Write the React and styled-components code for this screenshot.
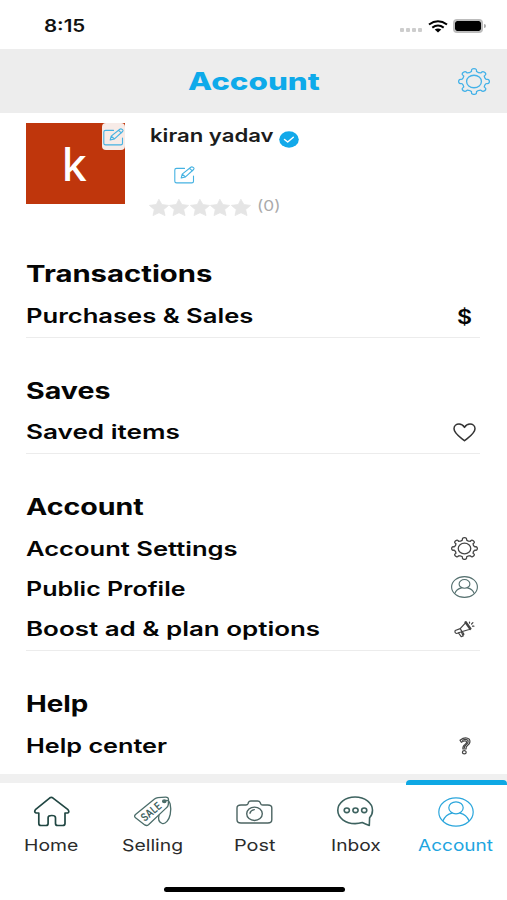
import React, { useLayoutEffect, useRef, useState } from 'react';
import styled, { createGlobalStyle } from 'styled-components';

// Text that is widened to a given width, the letters are drawn extended
const FitText = ({ children, width, ...rest }) => {
  const ref = useRef(null);
  const [scale, setScale] = useState(1);

  useLayoutEffect(() => {
    setScale(width / ref.current.offsetWidth);
  }, [width, children]);

  return (
    <TextBox $width={width} {...rest}>
      <TextInner ref={ref} style={{ transform: `scaleX(${scale})` }}>
        {children}
      </TextInner>
    </TextBox>
  );
};

const gearPath = (cx, cy, rx, ry) => {
  const tooth = [
    [-22.5, 0.76],
    [-16, 0.8],
    [-11, 0.8],
    [-10.5, 0.98],
    [0, 1.04],
    [10.5, 0.98],
    [11, 0.8],
    [16, 0.8],
  ];
  const pts = [];
  for (let i = 0; i < 8; i++) {
    tooth.forEach(([a, r]) => {
      const t = ((i * 45 + a - 90) * Math.PI) / 180;
      pts.push([cx + Math.cos(t) * r * rx, cy + Math.sin(t) * r * ry]);
    });
  }
  const mid = (a, b) => `${((a[0] + b[0]) / 2).toFixed(2)} ${((a[1] + b[1]) / 2).toFixed(2)}`;
  let d = `M${mid(pts[pts.length - 1], pts[0])}`;
  pts.forEach((p, i) => {
    d += `Q${p[0].toFixed(2)} ${p[1].toFixed(2)} ${mid(p, pts[(i + 1) % pts.length])}`;
  });
  return d + 'Z';
};

const GearIcon = ({ w, h, ...rest }) => (
  <Icon width={w} height={h} viewBox={`0 0 ${w} ${h}`} {...rest}>
    <path d={gearPath(w / 2, h / 2, w / 2 - 0.9, h / 2 - 0.9)} />
    <ellipse cx={w / 2} cy={h / 2} rx={w * 0.232} ry={h * 0.232} />
  </Icon>
);

const EditIcon = () => (
  <Icon width="21" height="18" viewBox="0 0 21 18" $color="#45b2e2" $stroke={1.1}>
    <path d="M10.5 2.4H2.6Q.8 2.4.8 4v11.2q0 1.7 1.8 1.7h15.2q1.7 0 1.7-1.7V10" />
    <path d="M7.2 12l1-3.900L16.800 1.200q1-.8 2.200.1 1.700 1 .6 2.200L11.500 10.900zM8.200 8.100l3.300 2.800M15.500 2.300l2.900 2.500" />
  </Icon>
);

const UserIcon = ({ w, h, ...rest }) => (
  <Icon width={w} height={h} viewBox="0 0 36 30" preserveAspectRatio="none" {...rest}>
    <ellipse cx="18" cy="15" rx="17.2" ry="14.2" />
    <ellipse cx="18" cy="10.800" rx="7.200" ry="6" />
    <path d="M5 23.800Q7.500 17.800 14 16.200M31 23.800Q28.500 17.800 22 16.200" />
  </Icon>
);

const HeartIcon = () => (
  <Icon width="23" height="19" viewBox="0 0 23 19" $color="#333" $stroke={1.5}>
    <path d="M11.500 17.800C8 14.700 1 10.700 1 5.800 1 3 3.300 1.100 6 1.100c2.500 0 4.300 1.300 5.500 3.300 1.200-2 3-3.300 5.500-3.300 2.700 0 5 1.900 5 4.700 0 4.900-7 8.900-10.500 12z" />
  </Icon>
);

const MegaphoneIcon = () => (
  <Icon width="22" height="18" viewBox="0 0 22 18" $color="#444" $stroke={1.2}>
    <path d="M1.200 10.500L6.200 8.600 11.500 2.800 16 9.200 7.500 11.800 2.700 13.500Q.3 12.800 1.200 10.500zM6.200 8.600l1.800 3M10.800 2.200l1.200-.6 5 7-.9 1z" />
    <path d="M4.500 13l2.700 3.700 2-.8-1.700-3.700M7.500 12.200l2 .8.300 1.700" />
    <path d="M15.500 3.100V2M17.600 4l1.300-1.300M18.500 6.200h1.400" />
  </Icon>
);

const QuestionIcon = () => (
  <Icon width="12" height="18" viewBox="0 0 12 18" $color="#444" $stroke={1.2}>
    <path d="M1 3.200Q6.500-1 10.300 2.300 12.200 5.500 8.700 8.300 6.900 9.600 7 12H3.900Q3.600 9 6 7.400 8.300 5.500 7.300 4.300 5.800 3.100 2.300 5.300z" />
    <ellipse cx="5.300" cy="15.300" rx="1.900" ry="1.600" />
    <path d="M3.500 3.300Q7.500 1.400 9 3.700 9.700 5.600 7 7.700 5.200 9.300 5.400 11" />
  </Icon>
);

const HomeIcon = () => (
  <Icon width="35" height="31" viewBox="0.5 0 35 31" $color="#214743" $stroke={1.7}>
    <path d="M16.400 1.800Q17.800.8 19.200 1.800L34.500 13.700Q36.300 16.100 34.200 17H31.500V27.500Q31.500 29.500 29.200 29.500H24.200Q22 29.500 22 27.500V21.800Q22 19.500 18.300 19.500T14.600 21.800V27.500Q14.600 29.500 12.500 29.500H7.500Q5.300 29.500 5.300 27.500V17H2.600Q.2 16.100 1.900 13.700Z" />
  </Icon>
);

const SaleIcon = () => (
  <Icon width="36" height="31" viewBox="1 0 36 31" $color="#4b6d6a" $stroke={1.300}>
    <path d="M1.500 18.500L20.500 3Q22 1.800 24 1.600L31.500 1.100Q34.700 1 34.500 4L34.300 8.700Q34.100 10.400 32.300 11.900L14.500 28.700Q12.600 30.200 10.800 28.900L1.500 21.700Q-.3 20.300 1.500 18.500z" />
    <ellipse cx="30.300" cy="5.300" rx="1.700" ry="1.400" fill="#4b6d6a" />
    <path d="M31 5C36.500 1.500 37.500 12 36.200 18.500 35 24 31.500 28.500 28.200 27.500 24.500 26 24 22.800 25 19.400" />
    <SaleText x="10.800" y="26" textLength="23" lengthAdjust="spacingAndGlyphs" transform="rotate(-40 10.800 26)">
      SALE
    </SaleText>
  </Icon>
);

const CameraIcon = () => (
  <Icon width="37" height="24" viewBox="0 0 37 24" $color="#4c6462" $stroke={1.400}>
    <path d="M5 5H10Q11.500 5 12 3.800L12.500 2.200Q13 1 14.800 1H21.600Q23.500 1 24 2.200L24.700 3.800Q25 5 26.700 5H31.800Q35.800 5 35.800 8V19.800Q35.800 23 31.800 23H5Q1 23 1 19.800V8Q1 5 5 5z" />
    <ellipse cx="18.500" cy="13.800" rx="7.800" ry="6.700" />
    <path d="M14 13.200Q14.600 10.200 18.300 9.600" />
  </Icon>
);

const ChatIcon = () => (
  <Icon width="35" height="31" viewBox="1.2 0 35 31" $color="#3d625f" $stroke={1.600}>
    <path d="M32.500 29.500Q28.500 28 25.500 26.500 22 27.600 18.300 27.600C8.600 27.600 1 21.800 1 14.300S8.600 1 18.300 1 35.700 7 35.700 14.300Q35.700 18.800 32.800 21.700z" />
    <ellipse cx="10" cy="14.300" rx="2.600" ry="2.300" />
    <ellipse cx="18.700" cy="14.300" rx="2.600" ry="2.300" />
    <ellipse cx="27.400" cy="14.300" rx="2.600" ry="2.300" />
  </Icon>
);

const VerifiedIcon = () => (
  <Icon width="20" height="17" viewBox="0 0 20 17" $color="#fff" $stroke={1.500}>
    <ellipse cx="10" cy="8.500" rx="9.800" ry="8.300" fill="#12a9ea" stroke="none" />
    <path d="M5.500 8.500l3.200 2.500 5.600-4.700" />
  </Icon>
);

const StarIcon = () => (
  <Icon width="20" height="17" viewBox="0 0 20 17" $color="#e5e5e5" $stroke={0.8}>
    <path fill="#e5e5e5" d="M10 .5L12.900 5.500 19.600 6.400 14.700 10.500 16 16.600 10 13.700 4 16.600 5.300 10.500.4 6.400 7.100 5.500z" />
  </Icon>
);

const WifiIcon = () => (
  <Icon width="20" height="13" viewBox="0 0 20 13" $color="#000" $stroke={2.100}>
    <path strokeLinecap="butt" d="M1 4.500Q10-2 19 4.500M4.300 7.600Q10 3.500 15.700 7.600" />
    <path stroke="none" fill="#000" d="M6.700 9.600Q10 7.400 13.300 9.600L10 12.400z" />
  </Icon>
);

const sections = [
  {
    title: 'Transactions',
    width: 186,
    rows: [{ text: 'Purchases & Sales', width: 227, icon: <Dollar /> }],
  },
  {
    title: 'Saves',
    width: 85,
    rows: [{ text: 'Saved items', width: 154, icon: <HeartIcon /> }],
  },
  {
    title: 'Account',
    width: 118,
    rows: [
      { text: 'Account Settings', width: 211, icon: <GearIcon w={27} h={23} $color="#444" $stroke={1.3} /> },
      { text: 'Public Profile', width: 159, lift: 2, icon: <UserIcon w={27} h={22} $color="#55706f" $stroke={1.500} /> },
      { text: 'Boost ad & plan options', width: 294, icon: <MegaphoneIcon /> },
    ],
  },
  {
    title: 'Help',
    width: 63,
    last: true,
    rows: [{ text: 'Help center', width: 141, icon: <QuestionIcon /> }],
  },
];

const tabs = [
  { text: 'Home', width: 54, icon: <HomeIcon /> },
  { text: 'Selling', width: 61, icon: <SaleIcon /> },
  { text: 'Post', width: 41, icon: <CameraIcon /> },
  { text: 'Inbox', width: 50, icon: <ChatIcon /> },
  { text: 'Account', width: 75, active: true, icon: <UserIcon w={36} h={30} $color="#2ba6dc" $stroke={1.200} /> },
];

function Dollar() {
  return (
    <DollarSign>
      <FitText width={15} $size={20} $weight={600}>$</FitText>
    </DollarSign>
  );
}

const App = () => {
  return (
    <Wrapper>
      <GlobalStyle />

      <StatusBar>
        <FitText width={41} $size={17} $weight={600} $color="#111">8:15</FitText>
        <StatusIcons>
          <Dots>
            <Dot />
            <Dot />
            <Dot />
            <Dot />
          </Dots>
          <WifiIcon />
          <Battery>
            <BatteryBody />
            <BatteryTip />
          </Battery>
        </StatusIcons>
      </StatusBar>

      <Header>
        <span />
        <HeaderTitle>
          <FitText width={132} $size={24} $weight={800} $color="#0eaaea">Account</FitText>
        </HeaderTitle>
        <GearIcon w={32} h={27} $color="#45b2e8" $stroke={1.300} />
      </Header>

      <Profile>
        <Avatar>
          <Letter>k</Letter>
          <AvatarEdit>
            <EditIcon />
          </AvatarEdit>
        </Avatar>
        <ProfileInfo>
          <NameRow>
            <Name>
              <FitText width={123} $size={18} $weight={600} $color="#1c1c1c">kiran yadav</FitText>
            </Name>
            <VerifiedIcon />
          </NameRow>
          <EditRow>
            <EditIcon />
          </EditRow>
          <Rating>
            <StarIcon />
            <StarIcon />
            <StarIcon />
            <StarIcon />
            <StarIcon />
            <Count>
              <FitText width={23} $size={15} $weight={400} $color="#aaa">(0)</FitText>
            </Count>
          </Rating>
        </ProfileInfo>
      </Profile>

      <Content>
        {sections.map(section => (
          <Section key={section.title} $last={section.last}>
            <SectionTitle>
              <FitText width={section.width} $size={22.5} $weight={750}>{section.title}</FitText>
            </SectionTitle>
            {section.rows.map(row => (
              <Row key={row.text}>
                <RowLabel>
                  <FitText width={row.width} $size={19.500} $weight={600}>{row.text}</FitText>
                </RowLabel>
                <RowIcon $lift={row.lift}>{row.icon}</RowIcon>
              </Row>
            ))}
          </Section>
        ))}
      </Content>

      <TabBar>
        {tabs.map(tab => (
          <Tab key={tab.text} $active={tab.active}>
            <TabIcon>{tab.icon}</TabIcon>
            <FitText width={tab.width} $size={16.500} $weight={400} $color={tab.active ? '#1ea5df' : '#2b2b2b'}>
              {tab.text}
            </FitText>
          </Tab>
        ))}
      </TabBar>

      <BottomArea>
        <HomeIndicator />
      </BottomArea>
    </Wrapper>
  );
};

export default App;

const GlobalStyle = createGlobalStyle`
  * {
    box-sizing: border-box;
  }

  body {
    margin: 0;
    background: #fff;
    font-family: Inter, "Liberation Sans", sans-serif;
  }
`;

const Wrapper = styled.div`
  display: flex;
  flex-direction: column;
  width: 507px;
  height: 900px;
  overflow: hidden;
  background: #fff;
`;

const TextBox = styled.span`
  display: block;
  flex: none;
  width: ${p => p.$width}px;
  font-size: ${p => p.$size}px;
  font-weight: ${p => p.$weight};
  line-height: 1.2;
  color: ${p => p.$color || '#050505'};
`;

const TextInner = styled.span`
  display: inline-block;
  white-space: nowrap;
  transform-origin: 0 50%;
`;

const Icon = styled.svg`
  display: block;
  flex: none;
  overflow: visible;
  fill: none;
  stroke: ${p => p.$color};
  stroke-width: ${p => p.$stroke};
  stroke-linecap: round;
  stroke-linejoin: round;
`;

const SaleText = styled.text`
  font-size: 11px;
  font-weight: 600;
  fill: #3d625f;
  stroke: none;
`;

const StatusBar = styled.div`
  display: flex;
  flex: none;
  align-items: center;
  justify-content: space-between;
  height: 49px;
  padding: 3px 21px 0 44px;
`;

const StatusIcons = styled.div`
  display: flex;
  align-items: center;
`;

const Dots = styled.div`
  display: flex;
  gap: 2px;
  margin: 8px 6px 0 0;
`;

const Dot = styled.div`
  width: 4px;
  height: 4px;
  border-radius: 1px;
  background: #cdcdcd;
`;

const Battery = styled.div`
  display: flex;
  align-items: center;
  gap: 1px;
  margin-left: 5px;
`;

const BatteryBody = styled.div`
  width: 30px;
  height: 14px;
  border: 2px solid #bcbcbc;
  border-radius: 4px;
  background: #000;
  background-clip: padding-box;
`;

const BatteryTip = styled.div`
  width: 2px;
  height: 4px;
  border-radius: 0 2px 2px 0;
  background: #aaa;
`;

const Header = styled.div`
  display: grid;
  flex: none;
  grid-template-columns: 1fr auto 1fr;
  align-items: center;
  height: 64px;
  padding: 0 17px;
  background: #ededed;

  svg {
    justify-self: end;
  }
`;

const HeaderTitle = styled.div`
  padding-top: 2px;
`;

const Profile = styled.div`
  display: flex;
  flex: none;
  gap: 24px;
  height: 139px;
  padding: 10px 26px 0;
`;

const Avatar = styled.div`
  position: relative;
  display: flex;
  align-items: center;
  justify-content: center;
  width: 99px;
  height: 81px;
  background: #bf360c;
`;

const Letter = styled.span`
  padding: 0 3px 0 0;
  font-family: "Noto Sans", sans-serif;
  font-size: 45px;
  font-weight: 500;
  line-height: 1;
  color: #fff;
`;

const AvatarEdit = styled.div`
  position: absolute;
  top: 0;
  right: 0;
  display: flex;
  align-items: center;
  justify-content: center;
  width: 23px;
  height: 27px;
  border-radius: 4px;
  background: #f7ebe7;
`;

const ProfileInfo = styled.div`
  display: flex;
  flex-direction: column;
`;

const NameRow = styled.div`
  display: flex;
  align-items: flex-start;
  gap: 6px;
  height: 43px;

  svg {
    margin-top: 8px;
  }
`;

const Name = styled.div`
  padding: 1.5px 0 0 1px;
`;

const EditRow = styled.div`
  height: 32.5px;
  padding-left: 24.5px;
`;

const Rating = styled.div`
  display: flex;
  align-items: flex-start;
  gap: 0.4px;
`;

const Count = styled.div`
  margin: -2px 0 0 6px;
`;

const Content = styled.div`
  flex: none;
  height: 522px;
  padding: 0 27px 0 26px;
`;

const Section = styled.section`
  margin-bottom: 30.75px;
  padding-bottom: 1.5px;
  border-bottom: 1px solid ${p => (p.$last ? 'transparent' : '#ececec')};
`;

const SectionTitle = styled.div`
  display: flex;
  align-items: center;
  height: 43px;
`;

const Row = styled.div`
  display: flex;
  align-items: center;
  justify-content: space-between;
  height: 40.25px;
`;

const RowLabel = styled.div`
  padding-top: 3px;
`;

const RowIcon = styled.div`
  display: flex;
  justify-content: center;
  width: 31px;
  margin-top: ${p => (p.$lift ? 1 - 2 * p.$lift : 1)}px;
`;

const DollarSign = styled.div`
  padding-top: 2px;
`;

const TabBar = styled.nav`
  display: grid;
  flex: none;
  grid-template-columns: repeat(5, 1fr);
  height: 87px;
  border-top: 9px solid #f0f0f0;
`;

const Tab = styled.div`
  position: relative;
  display: flex;
  flex-direction: column;
  align-items: center;
  padding: ${p => (p.$active ? '12px 1px 0 0' : '12px 0 0 1.5px')};

  &::before {
    content: "";
    display: ${p => (p.$active ? 'block' : 'none')};
    position: absolute;
    top: -3px;
    left: 0;
    right: 0;
    height: 5px;
    border-radius: 4px 4px 0 0;
    background: #0ea8e4;
  }
`;

const TabIcon = styled.div`
  display: flex;
  align-items: center;
  height: 33px;
  margin-bottom: 7.5px;
`;

const BottomArea = styled.div`
  display: flex;
  justify-content: center;
  padding: 25.5px 0 0 1px;
`;

const HomeIndicator = styled.div`
  width: 181px;
  height: 5px;
  border-radius: 3px;
  background: #000;
`;
